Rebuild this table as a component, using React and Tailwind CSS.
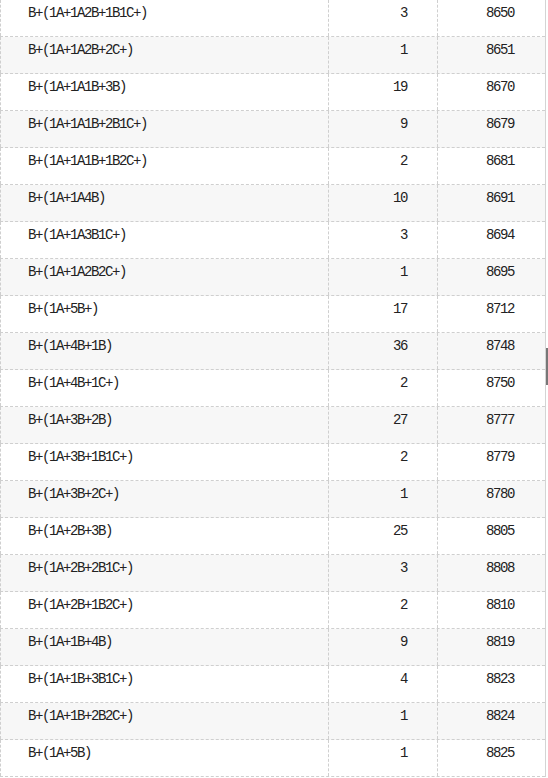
const rows = [
  ['B+(1A+1A2B+1B1C+)', '3', '8650'],
  ['B+(1A+1A2B+2C+)', '1', '8651'],
  ['B+(1A+1A1B+3B)', '19', '8670'],
  ['B+(1A+1A1B+2B1C+)', '9', '8679'],
  ['B+(1A+1A1B+1B2C+)', '2', '8681'],
  ['B+(1A+1A4B)', '10', '8691'],
  ['B+(1A+1A3B1C+)', '3', '8694'],
  ['B+(1A+1A2B2C+)', '1', '8695'],
  ['B+(1A+5B+)', '17', '8712'],
  ['B+(1A+4B+1B)', '36', '8748'],
  ['B+(1A+4B+1C+)', '2', '8750'],
  ['B+(1A+3B+2B)', '27', '8777'],
  ['B+(1A+3B+1B1C+)', '2', '8779'],
  ['B+(1A+3B+2C+)', '1', '8780'],
  ['B+(1A+2B+3B)', '25', '8805'],
  ['B+(1A+2B+2B1C+)', '3', '8808'],
  ['B+(1A+2B+1B2C+)', '2', '8810'],
  ['B+(1A+1B+4B)', '9', '8819'],
  ['B+(1A+1B+3B1C+)', '4', '8823'],
  ['B+(1A+1B+2B2C+)', '1', '8824'],
  ['B+(1A+5B)', '1', '8825'],
];

export default function App() {
  return (
    <div className="relative w-[548px] h-[778px] overflow-hidden bg-white">
      <div
        className="w-[546px] border-r border-[#d4d4d4] text-[14px] tracking-[-1.4px] text-[#222]"
        style={{ fontFamily: '"Liberation Mono", "Noto Sans CJK SC", monospace' }}
      >
        {rows.map(([name, count, code], i) => (
          <div
            key={code}
            className={`flex h-[37px] border-b border-dashed border-[#cfcfcf] ${i % 2 ? 'bg-[#f7f7f7]' : 'bg-white'}`}
          >
            <div className="w-[328px] border-l border-dashed border-[#cfcfcf] pl-[27px] pb-[9px] flex items-center">
              {name}
            </div>
            <div className="w-[109px] border-l border-dashed border-[#cfcfcf] pr-[30px] pb-[9px] flex items-center justify-end">
              {count}
            </div>
            <div className="w-[108px] border-l border-dashed border-[#cfcfcf] pr-[31px] pb-[9px] flex items-center justify-end">
              {code}
            </div>
          </div>
        ))}
      </div>
      <div className="absolute left-[546px] top-[348px] w-[2px] h-[37px] bg-[#777]" />
    </div>
  );
}
